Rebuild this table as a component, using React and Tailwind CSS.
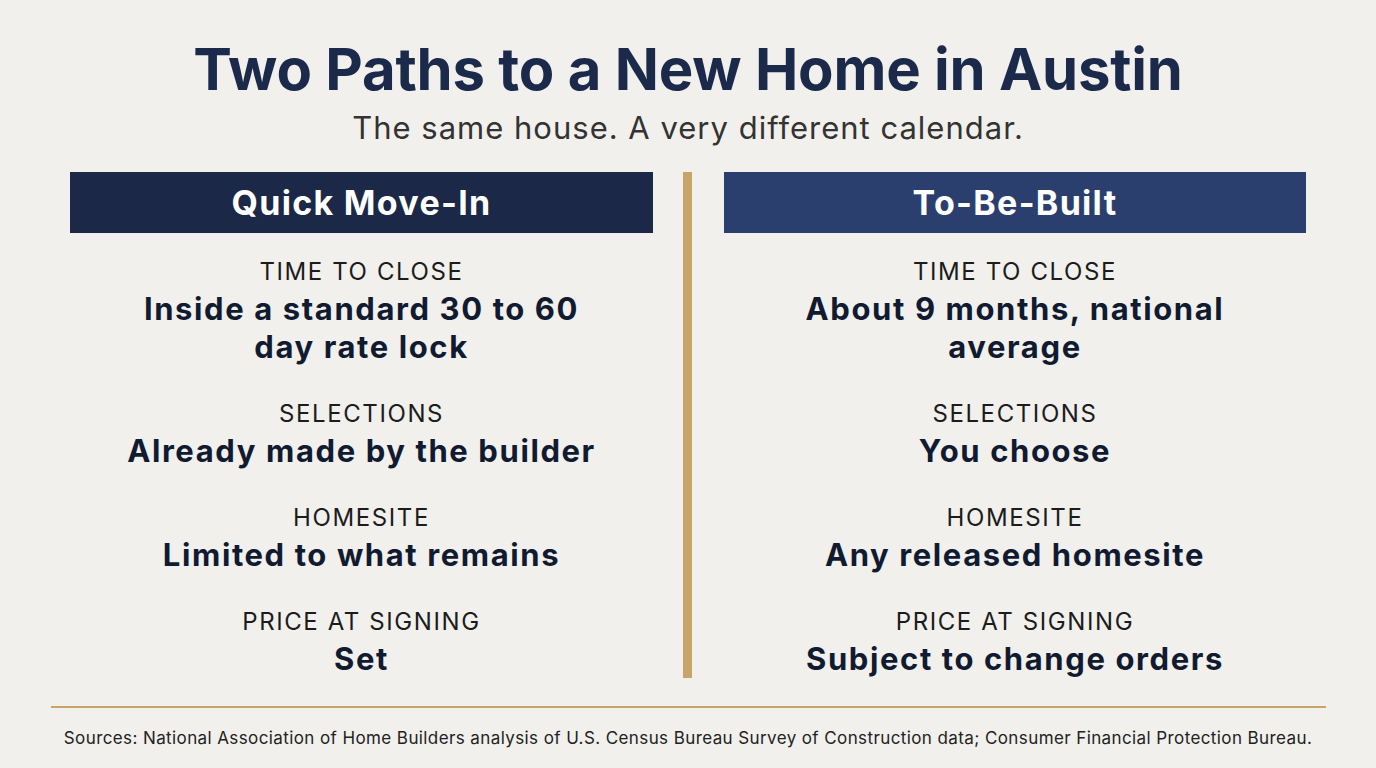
import React from 'react';

const rows = [
  {
    label: 'TIME TO CLOSE',
    left: ['Inside a standard 30 to 60', 'day rate lock'],
    right: ['About 9 months, national', 'average'],
  },
  { label: 'SELECTIONS', left: ['Already made by the builder'], right: ['You choose'] },
  { label: 'HOMESITE', left: ['Limited to what remains'], right: ['Any released homesite'] },
  { label: 'PRICE AT SIGNING', left: ['Set'], right: ['Subject to change orders'] },
];

const Column = ({ title, headerClass, side }) => (
  <div className="flex flex-col items-center">
    <div className={`w-full h-[61px] flex items-center justify-center ${headerClass}`}>
      <span className="text-white font-bold text-[34px] tracking-[1.3px]">{title}</span>
    </div>
    <div className="flex flex-col gap-[33px] mt-[24px] text-center">
      {rows.map((row) => (
        <div key={row.label} className="flex flex-col items-center">
          <div className="text-[24px] leading-[30px] tracking-[1.6px] text-[#1c1c1c] mb-[3px]">{row.label}</div>
          {row[side].map((line) => (
            <div key={line} className="text-[31px] leading-[38px] font-bold text-[#101a30] tracking-[1.6px]">
              {line}
            </div>
          ))}
        </div>
      ))}
    </div>
  </div>
);

export default function App() {
  return (
    <div
      className="w-[1376px] h-[768px] bg-[#f1f0ec] flex flex-col items-center overflow-hidden"
      style={{ fontFamily: 'Inter, "Noto Sans", sans-serif' }}
    >
      <h1 className="mt-[37px] text-[58px] leading-[64px] font-bold text-[#1b2a4a] tracking-[-0.2px]">
        Two Paths to a New Home in Austin
      </h1>
      <p className="mt-[9px] text-[31px] leading-[36px] tracking-[1px] text-[#333333]">
        The same house. A very different calendar.
      </p>

      <div className="mt-[26px] flex items-stretch">
        <div className="w-[583px]">
          <Column title="Quick Move-In" headerClass="bg-[#1b2847]" side="left" />
        </div>
        <div className="w-[9px] mx-[30px] bg-[#c8a46a]" />
        <div className="w-[582px] ml-[2px]">
          <Column title="To-Be-Built" headerClass="bg-[#2a3f6e]" side="right" />
        </div>
      </div>

      <div className="mt-[28px] w-[1275px] h-[2px] bg-[#c8a46a]" />
      <p className="mt-[18px] text-[17px] leading-[24px] tracking-[0.4px] text-[#222222]">
        Sources: National Association of Home Builders analysis of U.S. Census Bureau Survey of Construction data; Consumer Financial Protection Bureau.
      </p>
    </div>
  );
}
